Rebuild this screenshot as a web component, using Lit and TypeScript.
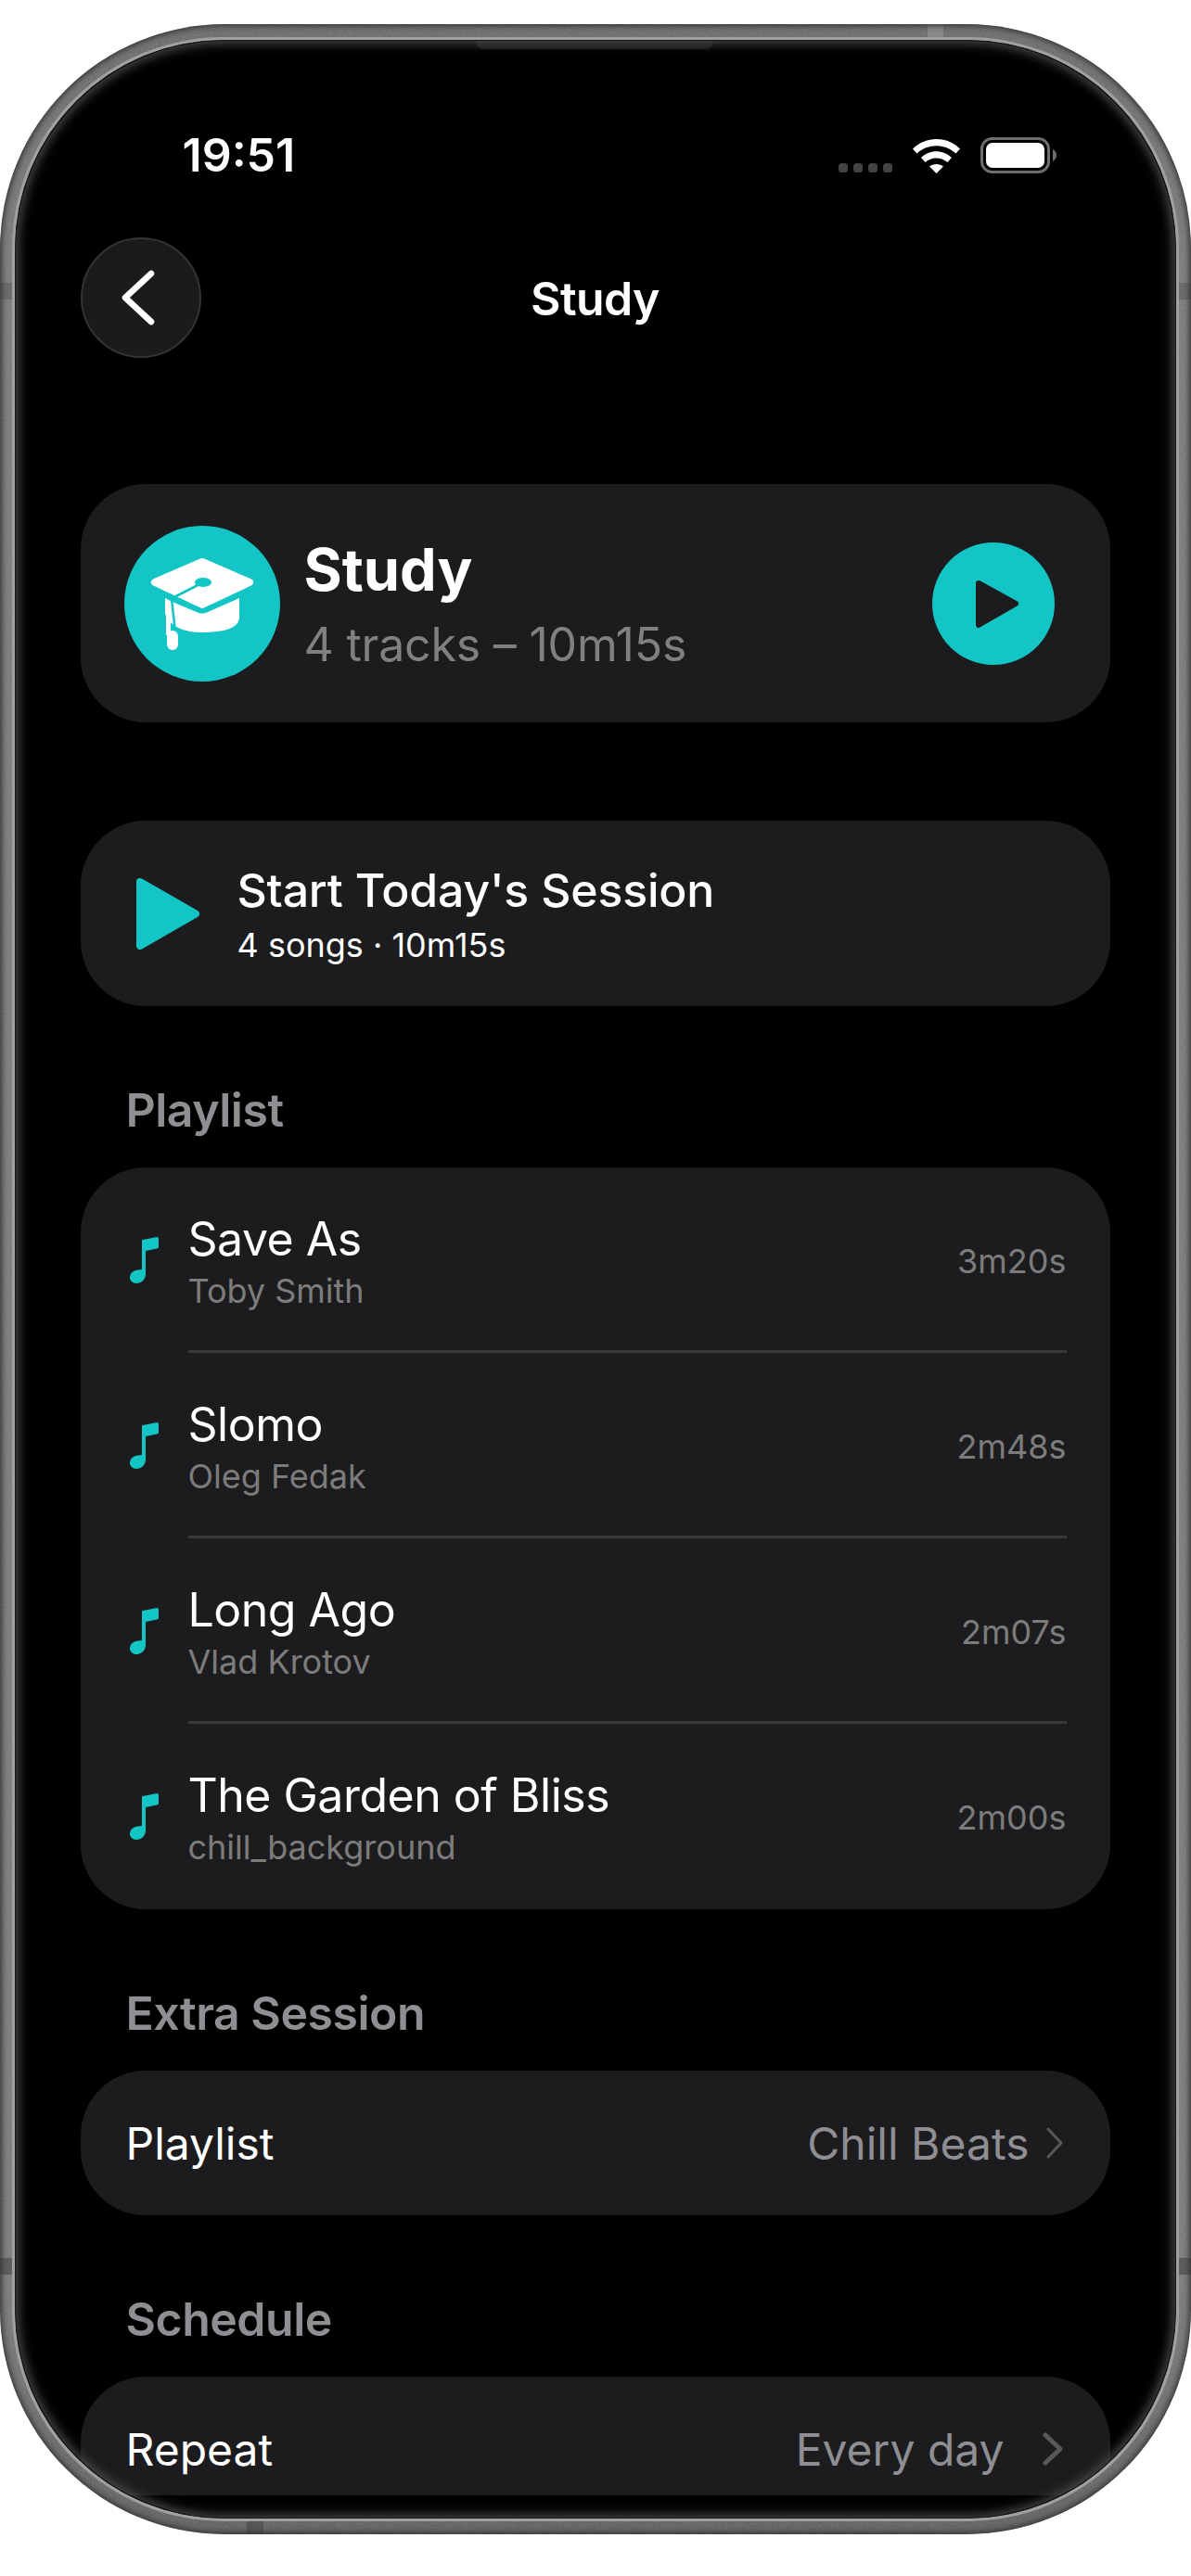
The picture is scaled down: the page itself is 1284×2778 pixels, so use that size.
import { LitElement, html, css, svg } from "lit";
import { customElement } from "lit/decorators.js";

const TEAL = "#14c5c5";

const noteIcon = svg`<path d="M13,4 Q13,3 14,3 L29,0 Q31,0 31,2 V11 Q31,12 29,12.5 L17,15 V40 C17,46 12,50 7,50 C3,50 0,47 0,43.5 C0,39 4,36 9,35.5 L13,35 Z" fill="${TEAL}"/>`;

const tracks = [
  { title: "Save As", artist: "Toby Smith", time: "3m20s" },
  { title: "Slomo", artist: "Oleg Fedak", time: "2m48s" },
  { title: "Long Ago", artist: "Vlad Krotov", time: "2m07s" },
  { title: "The Garden of Bliss", artist: "chill_background", time: "2m00s" },
];

@customElement("app-root")
export class AppRoot extends LitElement {
  static styles = css`
    :host {
      display: block;
      width: 1284px;
      height: 2778px;
      background: #fff;
      font-family: Inter, "Liberation Sans", sans-serif;
      color: #fff;
      overflow: hidden;
    }
    .phone {
      position: relative;
      margin-top: 26px;
      height: 2707px;
      box-sizing: border-box;
      padding: 14px 13px;
      border-radius: 242px;
      background: linear-gradient(180deg, #666 0%, #777 10%, #777 90%, #5a5a5a 100%);
      overflow: hidden;
    }
    .phone::after {
      content: "";
      position: absolute;
      inset: 0;
      border-radius: 242px;
      box-shadow: inset 0 0 6px 2px #333;
      pointer-events: none;
    }
    .noise { position: absolute; inset: 0; width: 100%; height: 100%; opacity: 0.3; }
    .band { position: absolute; background: #8a8a8a; }
    .band.top { left: 1000px; top: 0; width: 17px; height: 16px; }
    .band.bot { left: 266px; bottom: 0; width: 18px; height: 16px; background: #565656; }
    .band.l1, .band.r1 { top: 279px; width: 16px; height: 18px; background: #6c6c6c; }
    .band.l2, .band.r2 { top: 2409px; width: 16px; height: 18px; background: #5e5e5e; }
    .band.l1, .band.l2 { left: 0; }
    .band.r1, .band.r2 { right: 0; }
    .rim {
      position: relative;
      height: 100%;
      box-sizing: border-box;
      padding: 3px;
      border-radius: 228px;
      background: #a0a0a0;
    }
    .screen {
      position: relative;
      height: 100%;
      border-radius: 225px;
      background: #000;
      border: 1.5px solid #161616;
      box-sizing: border-box;
      overflow: hidden;
    }
    .glow {
      position: absolute;
      inset: 0;
      border-radius: 225px;
      box-shadow: inset 0 0 12px 3px #4a4a4a;
      pointer-events: none;
    }
    .notch {
      position: absolute;
      left: 496px;
      top: 0;
      width: 256px;
      height: 9px;
      background: #1a1a1a;
      border-radius: 0 0 8px 8px;
    }
    .content {
      height: 2646.5px;
      box-sizing: border-box;
      padding: 0 70.5px 0 69.5px;
      overflow: hidden;
    }
    .status {
      display: flex;
      justify-content: space-between;
      align-items: flex-end;
      height: 144px;
      padding: 0 58px 0 110px;
    }
    .time {
      font-size: 50px;
      line-height: 60px;
      font-weight: 600;
      margin-bottom: -9px;
    }
    .sys { display: flex; align-items: flex-end; gap: 22px; margin-bottom: 1px; }
    .dots { display: flex; gap: 6px; margin-bottom: 1px; }
    .dots i { width: 10px; height: 10px; border-radius: 3.5px; background: #444; display: block; }
    .sys svg { display: block; }
    .nav {
      display: grid;
      grid-template-columns: 130px 1fr 130px;
      align-items: center;
      margin-top: 67px;
      height: 132px;
    }
    .back {
      width: 130px;
      height: 130px;
      box-sizing: border-box;
      border-radius: 50%;
      background: #1b1b1d;
      border: 2px solid #333335;
      display: flex;
      align-items: center;
      justify-content: center;
    }
    .back svg { margin-right: 8px; }
    .nav-title {
      text-align: center;
      font-size: 50px;
      line-height: 60px;
      font-weight: 600;
      letter-spacing: -0.6px;
      margin-top: 2px;
    }
    .card { background: #1c1c1e; border-radius: 70px; }
    .hero {
      display: flex;
      align-items: center;
      height: 257px;
      margin-top: 135px;
      padding: 0 60px 0 47px;
    }
    .avatar { width: 168px; height: 168px; display: block; flex: none; }
    .hero-text { flex: 1; margin-left: 26px; }
    .hero-title { font-size: 63px; line-height: 76px; font-weight: 700; }
    .hero-sub { font-size: 50px; line-height: 60px; color: #808080; font-weight: 400; letter-spacing: -0.2px; margin-top: 13px; }
    .play { width: 132px; height: 132px; display: block; flex: none; }
    .session {
      display: flex;
      align-items: center;
      height: 200px;
      margin-top: 106px;
      padding-left: 59px;
    }
    .session svg { display: block; flex: none; }
    .session-text { margin-left: 40px; }
    .session-title { font-size: 50px; line-height: 60px; font-weight: 500; letter-spacing: -0.2px; }
    .session-sub { font-size: 36px; line-height: 44px; margin-top: 7px; }
    .label {
      font-size: 50px;
      line-height: 60px;
      font-weight: 600;
      letter-spacing: -0.5px;
      color: #8e8e93;
      padding-left: 49px;
      margin-top: 82px;
      margin-bottom: 32px;
    }
    .track {
      display: flex;
      align-items: center;
      height: 200px;
      padding-left: 53px;
      padding-right: 47px;
    }
    .track svg { display: block; flex: none; margin-right: 32px; }
    .track-body {
      flex: 1;
      align-self: stretch;
      display: flex;
      align-items: center;
      justify-content: space-between;
      box-sizing: border-box;
    }
    .track + .track .track-body { border-top: 3px solid #3a3a3c; margin-top: -3px; }
    .track-title { font-size: 50px; line-height: 60px; font-weight: 400; letter-spacing: -0.5px; }
    .track-artist { font-size: 36px; line-height: 42px; color: #7c7c7c; margin-top: 5px; }
    .track-time { font-size: 36px; color: #7c7c7c; margin-top: 2px; }
    .setting {
      display: flex;
      align-items: center;
      justify-content: space-between;
      height: 156px;
      padding: 0 50px 0 49px;
      font-size: 48px;
    }
    .value { display: flex; align-items: center; color: #8e8e93; }
    .value svg { display: block; }
    .gap1 { margin-left: 17px; }
    .gap2 { margin-left: 40px; }
  `;

  render() {
    return html`
      <div class="phone">
        <svg class="noise" xmlns="http://www.w3.org/2000/svg">
          <filter id="n"><feTurbulence type="fractalNoise" baseFrequency="1.2" numOctaves="2"/><feColorMatrix type="saturate" values="0"/></filter>
          <rect width="100%" height="100%" filter="url(#n)"/>
        </svg>
        <i class="band top"></i><i class="band bot"></i>
        <i class="band l1"></i><i class="band r1"></i><i class="band l2"></i><i class="band r2"></i>
        <div class="rim">
          <div class="screen">
            <div class="content">
              <div class="status">
                <div class="time">19:51</div>
                <div class="sys">
                  <div class="dots"><i></i><i></i><i></i><i></i></div>
                  <svg width="51" height="37" viewBox="0 0 51 37">
                    <path fill="#fff" d="M0,10.5 C14,-3.5 37,-3.5 51,10.5 L46.5,15.5 C35,4.5 16,4.5 4.5,15.5 Z"/>
                    <path fill="#fff" d="M9,20 C18,11 33,11 42,20 L37.5,25 C31,19 20,19 13.5,25 Z"/>
                    <path fill="#fff" d="M18,29.5 C22,26 29,26 33,29.5 L25.5,37 Z"/>
                  </svg>
                  <svg width="82" height="39" viewBox="0 0 82 39">
                    <rect x="1.5" y="1.5" width="72" height="36" rx="11" fill="none" stroke="#6e6e6e" stroke-width="3"/>
                    <rect x="6" y="6" width="63" height="27" rx="7" fill="#fff"/>
                    <path d="M78,13 C81,15 82,17 82,19.5 C82,22 81,24 78,26 Z" fill="#6e6e6e"/>
                  </svg>
                </div>
              </div>

              <div class="nav">
                <div class="back">
                  <svg width="42" height="66" viewBox="0 0 42 66">
                    <path d="M36,7 L8,33 L36,59" fill="none" stroke="#fff" stroke-width="6.5" stroke-linecap="round" stroke-linejoin="round"/>
                  </svg>
                </div>
                <div class="nav-title">Study</div>
                <div></div>
              </div>

              <div class="card hero">
                <svg class="avatar" viewBox="0 0 168 168">
                  <circle cx="84" cy="84" r="84" fill="${TEAL}"/>
                  <path d="M44,78 L54,83 L78,93 Q84,96 90,93 L124,78 V100 Q122,115 84,115 Q52,115 44,95 Z" fill="#fff"/>
                  <path d="M51,79 L55,115" stroke="${TEAL}" stroke-width="2.5" fill="none"/>
                  <rect x="45" y="90" width="5" height="28" fill="#fff"/>
                  <rect x="46" y="113" width="12" height="21" rx="6" fill="#fff"/>
                  <path d="M84,39 L135,61 L84,85 L33,61 Z" fill="#fff" stroke="#fff" stroke-width="8" stroke-linejoin="round"/>
                  <path d="M85,61 L50,79" stroke="${TEAL}" stroke-width="3" fill="none"/>
                  <ellipse cx="85" cy="61" rx="9" ry="5" fill="${TEAL}"/>
                </svg>
                <div class="hero-text">
                  <div class="hero-title">Study</div>
                  <div class="hero-sub">4 tracks – 10m15s</div>
                </div>
                <svg class="play" viewBox="0 0 132 132">
                  <circle cx="66" cy="66" r="66" fill="${TEAL}"/>
                  <path d="M50,44 L90,66 L50,89 Z" fill="#1c1c1e" stroke="#1c1c1e" stroke-width="6" stroke-linejoin="round"/>
                </svg>
              </div>

              <div class="card session">
                <svg width="70" height="79" viewBox="0 0 70 79">
                  <path d="M5,5 L65,39.5 L5,74 Z" fill="${TEAL}" stroke="${TEAL}" stroke-width="8" stroke-linejoin="round"/>
                </svg>
                <div class="session-text">
                  <div class="session-title">Start Today's Session</div>
                  <div class="session-sub">4 songs · 10m15s</div>
                </div>
              </div>

              <div class="label">Playlist</div>
              <div class="card">
                ${tracks.map(
                  (t) => html`
                    <div class="track">
                      <svg width="31" height="50" viewBox="0 0 31 50">${noteIcon}</svg>
                      <div class="track-body">
                        <div>
                          <div class="track-title">${t.title}</div>
                          <div class="track-artist">${t.artist}</div>
                        </div>
                        <div class="track-time">${t.time}</div>
                      </div>
                    </div>
                  `
                )}
              </div>

              <div class="label">Extra Session</div>
              <div class="card setting">
                <span>Playlist</span>
                <span class="value">Chill Beats
                  <svg class="gap1" width="20" height="36" viewBox="0 0 20 36"><path d="M3,3 L17,18 L3,33" fill="none" stroke="#58585a" stroke-width="3" stroke-linecap="round" stroke-linejoin="round"/></svg>
                </span>
              </div>

              <div class="label">Schedule</div>
              <div class="card setting">
                <span>Repeat</span>
                <span class="value">Every day
                  <svg class="gap2" width="24" height="36" viewBox="0 0 24 36"><path d="M4,3 L20,18 L4,33" fill="none" stroke="#58585a" stroke-width="5" stroke-linecap="round" stroke-linejoin="round"/></svg>
                </span>
              </div>
            </div>
            <div class="notch"></div>
            <div class="glow"></div>
          </div>
        </div>
      </div>
    `;
  }
}
